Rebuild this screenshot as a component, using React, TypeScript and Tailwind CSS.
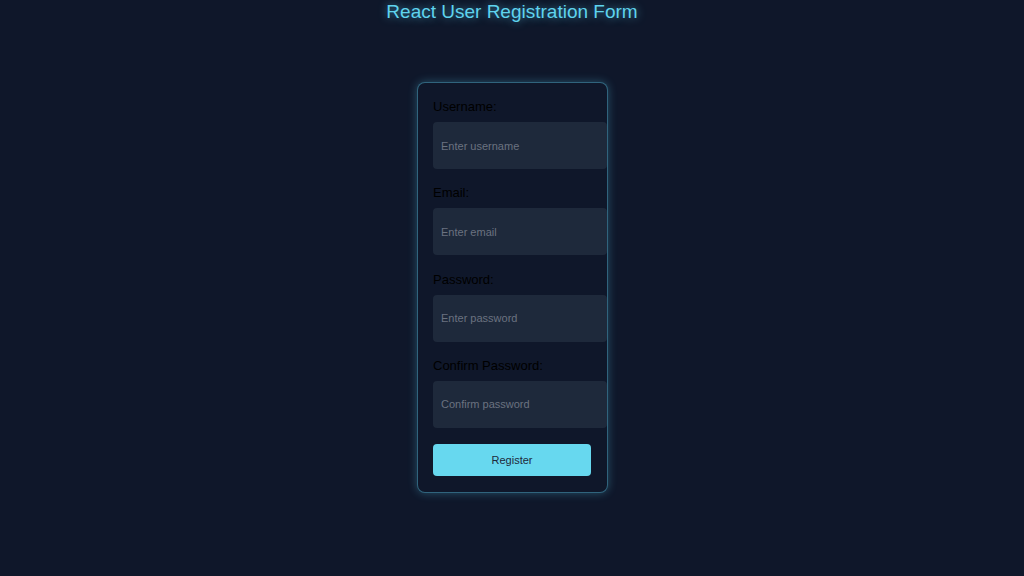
import { useState } from "react";

type Field = {
  name: string;
  label: string;
  type: string;
  placeholder: string;
};

const fields: Field[] = [
  { name: "username", label: "Username:", type: "text", placeholder: "Enter username" },
  { name: "email", label: "Email:", type: "email", placeholder: "Enter email" },
  { name: "password", label: "Password:", type: "password", placeholder: "Enter password" },
  { name: "confirm", label: "Confirm Password:", type: "password", placeholder: "Confirm password" },
];

export default function App() {
  const [values, setValues] = useState<Record<string, string>>({});

  return (
    <div className="min-h-screen bg-[#0f172a] flex flex-col items-center font-['Liberation_Sans',Arial,sans-serif]">
      <h1 className="text-[19px] leading-[23px] text-[#5fd3ee] [text-shadow:0_0_8px_rgba(97,218,251,0.6)]">
        React User Registration Form
      </h1>

      <form
        onSubmit={(e) => e.preventDefault()}
        className="mt-[59px] ml-[1px] w-[191px] rounded-[8px] border border-[#61dafb]/40 bg-[#0f172a] py-[16px] pl-[15px] pr-[16px] shadow-[0_0_10px_rgba(97,218,251,0.3)]"
      >
        {fields.map((f) => (
          <div key={f.name} className="mb-[16.33px]">
            <label htmlFor={f.name} className="block text-[13px] leading-[16px] text-black mb-[7px]">
              {f.label}
            </label>
            <input
              id={f.name}
              type={f.type}
              placeholder={f.placeholder}
              value={values[f.name] ?? ""}
              onChange={(e) => setValues((v) => ({ ...v, [f.name]: e.target.value }))}
              className="block w-[174px] h-[47px] rounded-[4px] bg-[#1e293b] px-[8px] text-[11px] text-white placeholder:text-[#6b7280] outline-none"
            />
          </div>
        ))}
        <button
          type="submit"
          className="mt-[1px] block w-[158px] h-[32px] rounded-[4px] bg-[#67d8ef] text-[11px] text-[#1e293b] cursor-pointer"
        >
          Register
        </button>
      </form>
    </div>
  );
}
